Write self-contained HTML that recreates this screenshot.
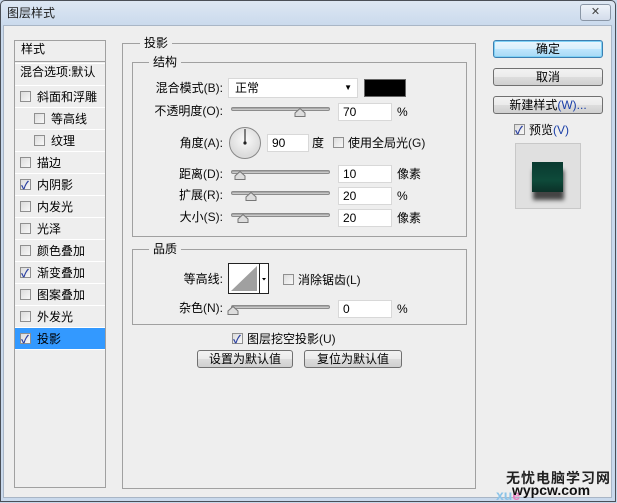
<!DOCTYPE html>
<html><head><meta charset="utf-8"><style>
*{margin:0;padding:0;box-sizing:border-box}
body{width:617px;height:503px;background:#c8d7ea;font-family:"Liberation Sans","Noto Sans CJK SC",sans-serif;font-size:12px;color:#000;position:relative;overflow:hidden}
.a{position:absolute;white-space:nowrap;line-height:14px}
.win{position:absolute;left:0;top:0;width:616px;height:502px;border:1px solid #4a4f57;border-radius:5px 5px 0 0;background:linear-gradient(#dde7f3,#c9d9ec 26px)}
.body{position:absolute;left:3px;top:25px;width:609px;height:473px;background:#eeeeee;border:1px solid #a9b6c6}
.box{position:absolute;border:1px solid #a0a0a0}
.grp{position:absolute;border:1px solid #a0a0a0}
.lbl{position:absolute;background:#eeeeee;padding:0 4px;line-height:14px}
.cb{position:absolute;width:11px;height:11px;border:1px solid #8f8f8f;background:linear-gradient(135deg,#dcdcdc,#f8f8f8)}
.cb.on::after{content:"✓";position:absolute;left:0;top:-3px;font-size:11px;color:#2a3fa0;font-weight:bold}
.item{position:absolute;left:15px;width:90px;height:22px;border-bottom:1px solid #fff}
.item span{position:absolute;left:22px;top:4px;line-height:14px}
.item .cb{left:5px;top:5px}
.inp{position:absolute;background:#fff;border:1px solid #d8d8d8;height:18px;padding-left:4px;line-height:16px}
.sl{position:absolute;height:4px;border-radius:2px;background:linear-gradient(#9a9a9a,#d8d8d8);border:1px solid #8c8c8c;width:99px}
.th{position:absolute;width:12px;height:9px}
.btn{position:absolute;height:18px;border:1px solid #707070;border-radius:3px;background:linear-gradient(#f2f2f2 0,#ebebeb 50%,#dddddd 51%,#cfcfcf);text-align:center;line-height:16px}
.r{text-align:right}
.blue{color:#1a3fa8}
.k{color:#111}
</style></head><body>
<div class="win"></div>
<div class="a" style="left:7px;top:6px;color:#1e1e1e">图层样式</div>
<div style="position:absolute;left:580px;top:4px;width:31px;height:17px;border:1px solid #8a96a6;border-radius:3px;background:linear-gradient(#eef3f9,#d3dceb);text-align:center;font-size:11px;line-height:15px;color:#444">✕</div>
<div class="body"></div>

<div class="box" style="left:14px;top:40px;width:92px;height:448px"></div>
<div class="a" style="left:21px;top:42px">样式</div>
<div style="position:absolute;left:15px;top:61px;width:90px;height:3px;border-top:1px solid #a0a0a0;border-bottom:1px solid #fff"></div>
<div class="a" style="left:20px;top:65px">混合选项:默认</div>
<div style="position:absolute;left:15px;top:85px;width:90px;border-top:1px solid #fff"></div>
<div class="item" style="top:86px"><div class="cb"></div><span>斜面和浮雕</span></div>
<div class="item" style="top:108px"><div class="cb" style="left:19px"></div><span style="left:36px">等高线</span></div>
<div class="item" style="top:130px"><div class="cb" style="left:19px"></div><span style="left:36px">纹理</span></div>
<div class="item" style="top:152px"><div class="cb"></div><span>描边</span></div>
<div class="item" style="top:174px"><div class="cb on"></div><span>内阴影</span></div>
<div class="item" style="top:196px"><div class="cb"></div><span>内发光</span></div>
<div class="item" style="top:218px"><div class="cb"></div><span>光泽</span></div>
<div class="item" style="top:240px"><div class="cb"></div><span>颜色叠加</span></div>
<div class="item" style="top:262px"><div class="cb on"></div><span>渐变叠加</span></div>
<div class="item" style="top:284px"><div class="cb"></div><span>图案叠加</span></div>
<div class="item" style="top:306px"><div class="cb"></div><span>外发光</span></div>
<div class="item" style="top:328px;height:22px;background:#3399ff"><div class="cb on"></div><span>投影</span></div>

<div class="grp" style="left:122px;top:43px;width:354px;height:446px"></div>
<div class="lbl" style="left:140px;top:36px">投影</div>
<div class="grp" style="left:132px;top:62px;width:335px;height:175px"></div>
<div class="lbl" style="left:149px;top:55px">结构</div>

<div class="a r" style="left:140px;top:81px;width:83px">混合模式<span class="k">(B)</span>:</div>
<div class="inp" style="left:228px;top:78px;width:130px;height:20px;line-height:18px;padding-left:6px">正常<span style="position:absolute;right:5px;top:0;font-size:8px">▼</span></div>
<div style="position:absolute;left:364px;top:79px;width:42px;height:18px;background:#000;border:1px solid #666"></div>

<div class="a r" style="left:140px;top:104px;width:83px">不透明度<span class="k">(O)</span>:</div>
<div class="sl" style="left:231px;top:107px"></div>
<svg class="th" style="left:294px;top:108px" viewBox="0 0 12 9"><path d="M1 8.5V5L6 .5 11 5v3.5z" fill="#ddd" stroke="#777"/></svg>
<div class="inp" style="left:338px;top:103px;width:54px">70</div>
<div class="a" style="left:397px;top:105px">%</div>

<div class="a r" style="left:140px;top:136px;width:83px">角度<span class="k">(A)</span>:</div>
<svg style="position:absolute;left:228px;top:126px" width="34" height="34"><defs><radialGradient id="g" cx=".5" cy=".4"><stop offset="0" stop-color="#fafafa"/><stop offset="1" stop-color="#dcdcdc"/></radialGradient></defs><circle cx="17" cy="17" r="15.5" fill="url(#g)" stroke="#888"/><line x1="17" y1="3" x2="17" y2="17" stroke="#333" stroke-width="1.2"/><circle cx="17" cy="17" r="1.6" fill="#222"/></svg>
<div class="inp" style="left:267px;top:134px;width:42px">90</div>
<div class="a" style="left:312px;top:136px">度</div>
<div class="cb" style="left:333px;top:137px"></div>
<div class="a" style="left:348px;top:136px">使用全局光<span class="k">(G)</span></div>

<div class="a r" style="left:140px;top:167px;width:83px">距离<span class="k">(D)</span>:</div>
<div class="sl" style="left:231px;top:170px"></div>
<svg class="th" style="left:234px;top:171px" viewBox="0 0 12 9"><path d="M1 8.5V5L6 .5 11 5v3.5z" fill="#ddd" stroke="#777"/></svg>
<div class="inp" style="left:338px;top:165px;width:54px">10</div>
<div class="a" style="left:397px;top:167px">像素</div>

<div class="a r" style="left:140px;top:188px;width:83px">扩展<span class="k">(R)</span>:</div>
<div class="sl" style="left:231px;top:191px"></div>
<svg class="th" style="left:245px;top:192px" viewBox="0 0 12 9"><path d="M1 8.5V5L6 .5 11 5v3.5z" fill="#ddd" stroke="#777"/></svg>
<div class="inp" style="left:338px;top:187px;width:54px">20</div>
<div class="a" style="left:397px;top:189px">%</div>

<div class="a r" style="left:140px;top:210px;width:83px">大小<span class="k">(S)</span>:</div>
<div class="sl" style="left:231px;top:213px"></div>
<svg class="th" style="left:237px;top:214px" viewBox="0 0 12 9"><path d="M1 8.5V5L6 .5 11 5v3.5z" fill="#ddd" stroke="#777"/></svg>
<div class="inp" style="left:338px;top:209px;width:54px">20</div>
<div class="a" style="left:397px;top:211px">像素</div>

<div class="grp" style="left:132px;top:249px;width:335px;height:76px"></div>
<div class="lbl" style="left:149px;top:242px">品质</div>
<div class="a r" style="left:140px;top:272px;width:83px">等高线:</div>
<svg style="position:absolute;left:228px;top:263px" width="41" height="31"><rect x=".5" y=".5" width="40" height="30" fill="#fff" stroke="#222"/><path d="M3 28L29 3V28z" fill="#a0a0a0"/><line x1="31.5" y1="0" x2="31.5" y2="31" stroke="#222"/><path d="M34 15h4l-2 2.5z" fill="#000"/></svg>
<div class="cb" style="left:283px;top:274px"></div>
<div class="a" style="left:298px;top:273px">消除锯齿<span class="k">(L)</span></div>
<div class="a r" style="left:140px;top:301px;width:83px">杂色<span class="k">(N)</span>:</div>
<div class="sl" style="left:231px;top:305px"></div>
<svg class="th" style="left:227px;top:306px" viewBox="0 0 12 9"><path d="M1 8.5V5L6 .5 11 5v3.5z" fill="#ddd" stroke="#777"/></svg>
<div class="inp" style="left:338px;top:300px;width:54px">0</div>
<div class="a" style="left:397px;top:302px">%</div>

<div class="cb on" style="left:232px;top:333px"></div>
<div class="a" style="left:247px;top:332px">图层挖空投影<span class="k">(U)</span></div>
<div class="btn" style="left:197px;top:350px;width:96px">设置为默认值</div>
<div class="btn" style="left:304px;top:350px;width:98px">复位为默认值</div>

<div class="btn" style="left:493px;top:40px;width:110px;border-color:#3c7fb1;background:linear-gradient(#eaf6fd,#d9f0fc 50%,#bee6fd 51%,#a7d9f5);box-shadow:inset 0 0 0 1px #7fd1f5">确定</div>
<div class="btn" style="left:493px;top:68px;width:110px">取消</div>
<div class="btn" style="left:493px;top:96px;width:110px">新建样式<span class="blue">(W)...</span></div>
<div class="cb on" style="left:514px;top:124px"></div>
<div class="a" style="left:529px;top:123px">预览<span class="blue">(V)</span></div>
<div style="position:absolute;left:515px;top:143px;width:66px;height:66px;background:#e0e0e0;border:1px solid #c8c8c8"></div>
<div style="position:absolute;left:533px;top:170px;width:31px;height:30px;background:#444;filter:blur(2px)"></div>
<div style="position:absolute;left:532px;top:162px;width:31px;height:30px;background:linear-gradient(#0a3a30,#0e4a3a 60%,#0b3128)"></div>

<div class="a" style="left:506px;top:471px;font-size:14px;font-weight:bold;color:#222;letter-spacing:1px">无忧电脑学习网</div>
<div class="a" style="left:496px;top:488px;font-size:14px;font-weight:bold;color:#8cc4e8">xu<span style="color:#e880c0">e</span></div>
<div class="a" style="left:512px;top:483px;font-size:14px;font-weight:bold;color:#111">wypcw.com</div>
</body></html>
